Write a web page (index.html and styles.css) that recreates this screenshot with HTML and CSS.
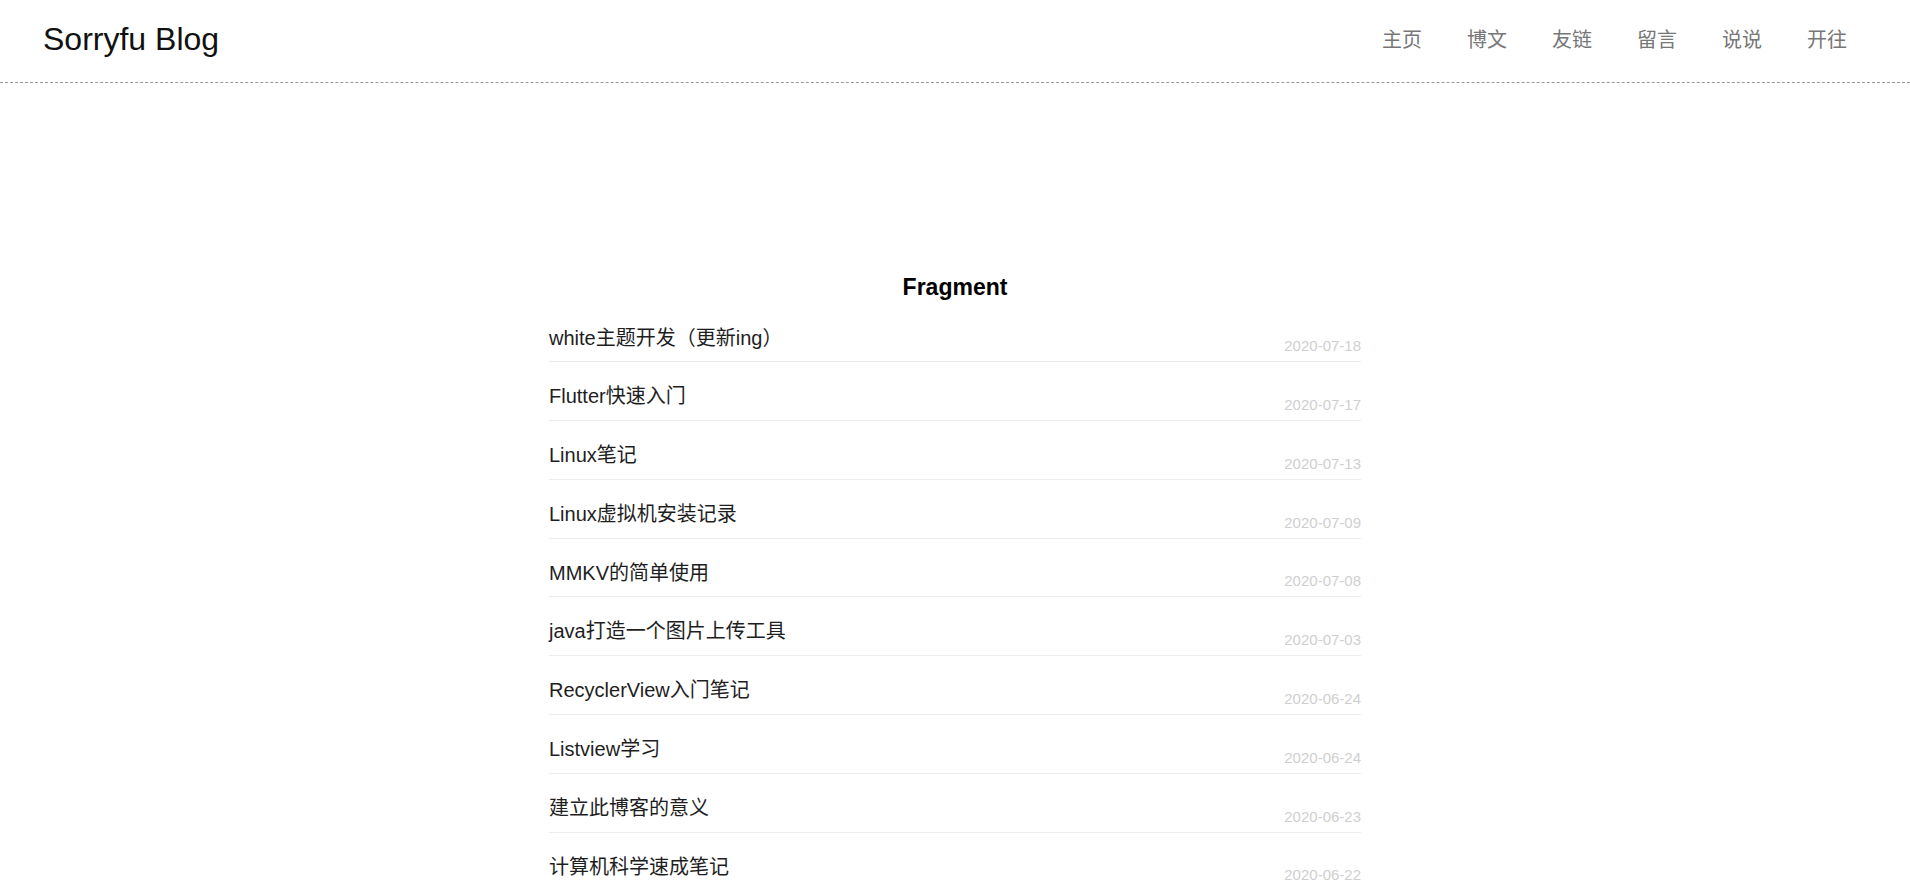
FILE: index.html
```html
<!DOCTYPE html>
<html lang="zh-CN">
<head>
<meta charset="utf-8">
<title>Sorryfu Blog</title>
<link rel="stylesheet" href="styles.css">
</head>
<body>
<header class="header">
  <a class="brand" href="#">Sorryfu Blog</a>
  <nav class="nav">
    <a href="#">主页</a>
    <a href="#">博文</a>
    <a href="#">友链</a>
    <a href="#">留言</a>
    <a href="#">说说</a>
    <a href="#">开往</a>
  </nav>
</header>
<main class="main">
  <h2 class="heading">Fragment</h2>
  <ul class="posts">
    <li class="post"><a class="post-title" href="#">white主题开发（更新ing）</a><span class="post-date">2020-07-18</span></li>
    <li class="post"><a class="post-title" href="#">Flutter快速入门</a><span class="post-date">2020-07-17</span></li>
    <li class="post"><a class="post-title" href="#">Linux笔记</a><span class="post-date">2020-07-13</span></li>
    <li class="post"><a class="post-title" href="#">Linux虚拟机安装记录</a><span class="post-date">2020-07-09</span></li>
    <li class="post"><a class="post-title" href="#">MMKV的简单使用</a><span class="post-date">2020-07-08</span></li>
    <li class="post"><a class="post-title" href="#">java打造一个图片上传工具</a><span class="post-date">2020-07-03</span></li>
    <li class="post"><a class="post-title" href="#">RecyclerView入门笔记</a><span class="post-date">2020-06-24</span></li>
    <li class="post"><a class="post-title" href="#">Listview学习</a><span class="post-date">2020-06-24</span></li>
    <li class="post"><a class="post-title" href="#">建立此博客的意义</a><span class="post-date">2020-06-23</span></li>
    <li class="post"><a class="post-title" href="#">计算机科学速成笔记</a><span class="post-date">2020-06-22</span></li>
  </ul>
</main>
</body>
</html>
```
FILE: styles.css
```css
* { box-sizing: border-box; }
html, body {
  margin: 0;
  padding: 0;
  background: #fff;
  font-family: "Liberation Sans", "Noto Sans CJK SC", sans-serif;
  color: #222;
}
a { text-decoration: none; color: inherit; }

.header {
  display: flex;
  justify-content: space-between;
  align-items: center;
  height: 83px;
  padding: 0 63px 0 43px;
  border-bottom: 1px dashed #999;
}
.brand {
  font-size: 32px;
  line-height: 32px;
  color: #111;
  margin-bottom: 5px;
}
.nav {
  display: flex;
  gap: 45px;
  margin-bottom: 4px;
}
.nav a {
  font-size: 20px;
  line-height: 20px;
  color: #777;
  font-family: "Noto Sans CJK SC", sans-serif;
}

.main {
  width: 812px;
  margin: 0 auto;
  padding-top: 187.5px;
}
.heading {
  margin: 0;
  text-align: center;
  font-size: 23px;
  line-height: 32px;
  font-weight: bold;
  color: #000;
}
.posts {
  list-style: none;
  margin: 1px 0 0;
  padding: 0;
}
.post {
  display: flex;
  justify-content: space-between;
  align-items: flex-end;
  padding: 20px 0 5px;
  border-bottom: 1px solid #ececec;
}
.post-title {
  font-size: 20px;
  line-height: 28px;
  margin-bottom: 4.8px;
  color: #1e1e1e;
}
.post-date {
  font-size: 15px;
  line-height: 20px;
  color: #cfcfcf;
}
```
